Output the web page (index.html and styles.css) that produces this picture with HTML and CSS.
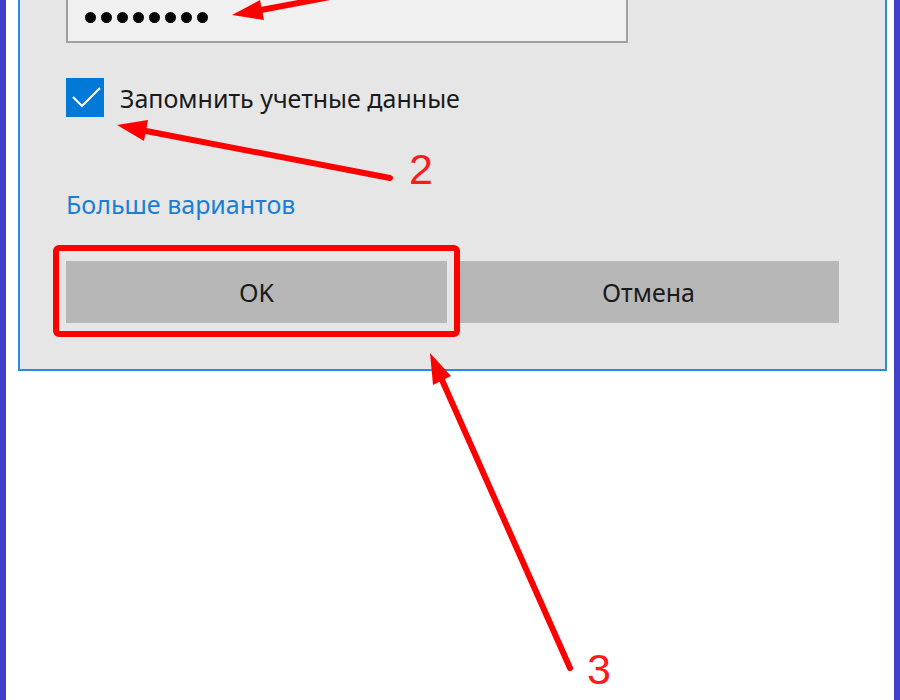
FILE: index.html
```html
<!DOCTYPE html>
<html lang="ru">
<head>
    <meta charset="UTF-8">
    <meta name="viewport" content="width=device-width, initial-scale=1.0">
    <title>Учетные данные</title>
    <link rel="stylesheet" href="styles.css">
</head>
<body>
    <div class="frame">
        <div class="dialog">
            <div class="password-field">
                <span class="dot"></span><span class="dot"></span><span class="dot"></span><span class="dot"></span>
                <span class="dot"></span><span class="dot"></span><span class="dot"></span><span class="dot"></span>
            </div>

            <label class="remember">
                <span class="checkbox">
                    <svg width="38" height="39" viewBox="0 0 38 39">
                        <path d="M7 19 L16 28 L34 10" fill="none" stroke="#fff" stroke-width="2.2"/>
                    </svg>
                </span>
                Запомнить учетные данные
            </label>

            <a class="more-link" href="#">Больше вариантов</a>

            <div class="buttons">
                <button class="btn">OK</button>
                <button class="btn">Отмена</button>
            </div>
        </div>

        <!-- red hints drawn over the dialog -->
        <svg class="marks" width="900" height="700" viewBox="0 0 900 700">
            <g stroke="#ff0000" stroke-width="6" stroke-linecap="round" fill="none">
                <line x1="330" y1="-3" x2="261" y2="10"/>
                <line x1="390" y1="178" x2="146" y2="131"/>
                <line x1="570" y1="668" x2="442" y2="380"/>
                <rect x="56" y="248" width="401" height="86" rx="3"/>
            </g>
            <g fill="#ff0000">
                <polygon points="232,15 260,0 264,20"/>
                <polygon points="117,125 148,120 144,141"/>
                <polygon points="430,353 451,376 433,385"/>
            </g>
            <text x="409" y="184" class="num">2</text>
            <text x="587" y="684" class="num">3</text>
        </svg>
    </div>
</body>
</html>
```

FILE: styles.css
```css
body {
    margin: 0;
    font-family: "Noto Sans", "Open Sans", Arial, sans-serif;
    background-color: #ffffff;
}
.frame {
    position: relative;
    height: 700px;
    border-left: 6px solid #4040cc;
    border-right: 6px solid #4040cc;
    padding-left: 12px;
    box-sizing: border-box;
    overflow: hidden;
}
.dialog {
    width: 869px;
    box-sizing: border-box;
    background-color: #e6e6e6;
    border: 2px solid #2a8ce0;
    border-top: none;
    padding: 0 45px 46px 46px;
    display: flex;
    flex-direction: column;
    align-items: flex-start;
}
.password-field {
    width: 562px;
    height: 43px;
    box-sizing: border-box;
    background-color: #f0f0f0;
    border: 2px solid #a0a0a0;
    border-top: none;
    padding-left: 17px;
    padding-bottom: 7px;
    display: flex;
    align-items: center;
    gap: 5px;
}
.dot {
    width: 11px;
    height: 11px;
    border-radius: 50%;
    background-color: #000;
}
.remember {
    margin-top: 35px;
    display: flex;
    align-items: center;
    gap: 16px;
    font-size: 25px;
    color: #1a1a1a;
}
.checkbox {
    width: 38px;
    height: 39px;
    background-color: #0078d7;
    display: flex;
}
.more-link {
    margin-top: 70px;
    font-size: 25px;
    color: #1a7fd4;
    text-decoration: none;
}
.buttons {
    margin-top: 40px;
    display: flex;
    gap: 11px;
}
.btn {
    width: 381px;
    height: 62px;
    border: none;
    background-color: #b7b7b7;
    font-family: inherit;
    font-size: 25px;
    color: #1a1a1a;
    padding: 0;
}
.marks {
    position: absolute;
    left: -6px;
    top: 0;
}
.num {
    font-family: "Liberation Sans", Arial, sans-serif;
    font-size: 43px;
    fill: #ff1a1a;
}
```
